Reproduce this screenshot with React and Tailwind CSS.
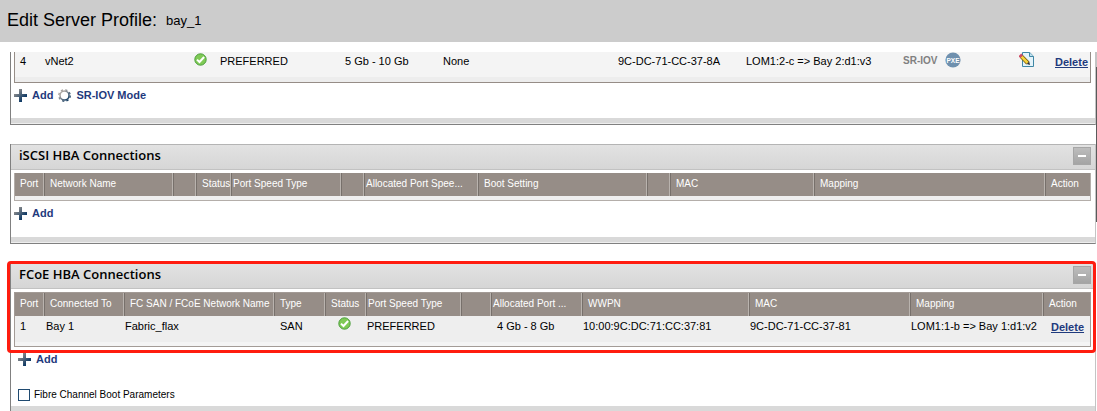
import clsx from "clsx";

const iscsiColumns = [
  { label: "Port", width: "w-[29px]" },
  { label: "Network Name", width: "w-[129px]" },
  { label: "", width: "w-[23px]" },
  { label: "Status", width: "w-[35px]" },
  { label: "Port Speed Type", width: "w-[110px]", tight: true },
  { label: "", width: "w-[23px]" },
  { label: "Allocated Port Spee...", width: "w-[114px]", tight: true },
  { label: "Boot Setting", width: "w-[169px]" },
  { label: "", width: "w-[23px]" },
  { label: "MAC", width: "w-[144px]" },
  { label: "Mapping", width: "" },
  { label: "Action", width: "w-[45px]" },
];

const fcoeColumns = [
  { label: "Port", width: "w-[29px]" },
  { label: "Connected To", width: "w-[80px]" },
  { label: "FC SAN / FCoE Network Name", width: "w-[150px]" },
  { label: "Type", width: "w-[51px]" },
  { label: "Status", width: "w-[41px]" },
  { label: "Port Speed Type", width: "w-[95px]", tight: true },
  { label: "", width: "w-[30px]" },
  { label: "Allocated Port ...", width: "w-[91px]", tight: true },
  { label: "WWPN", width: "w-[167px]" },
  { label: "MAC", width: "w-[161px]" },
  { label: "Mapping", width: "" },
  { label: "Action", width: "w-[47px]" },
];

function StatusOk() {
  return (
    <svg width="13" height="13" viewBox="0 0 13 13" role="img" aria-label="OK" className="block">
      <circle cx="6.5" cy="6.5" r="5.7" fill="#7fca55" stroke="#4c9e3e" />
      <path d="M3 6.6 5.5 9l4.6-5" fill="none" stroke="#fff" strokeWidth="2" />
    </svg>
  );
}

function PlusIcon() {
  return (
    <svg width="13" height="13" viewBox="0 0 13 13" aria-hidden="true">
      <defs>
        <linearGradient id="plus" x1="0" y1="0" x2="1" y2="1">
          <stop offset="0.2" stopColor="#8a8a8a" />
          <stop offset="0.75" stopColor="#0f3a66" />
        </linearGradient>
      </defs>
      <path d="M5 0h3v5h5v3H8v5H5V8H0V5h5z" fill="url(#plus)" />
    </svg>
  );
}

function GearIcon() {
  return (
    <svg width="13" height="13" viewBox="0 0 13 13" aria-hidden="true">
      <defs>
        <linearGradient id="gear" x1="0" y1="0" x2="1" y2="1">
          <stop offset="0.25" stopColor="#a9a4a0" />
          <stop offset="0.85" stopColor="#1d4468" />
        </linearGradient>
      </defs>
      <circle cx="6.5" cy="6.5" r="4.5" fill="none" stroke="url(#gear)" strokeWidth="1.5" />
      <circle cx="6.5" cy="6.5" r="5.7" fill="none" stroke="url(#gear)" strokeWidth="1.4" strokeDasharray="2.24 2.24" />
    </svg>
  );
}

function PxeIcon() {
  return (
    <svg width="16" height="16" viewBox="0 0 16 16" role="img" aria-label="PXE">
      <circle cx="8" cy="8" r="7.6" fill="#6f90ae" />
      <text x="8" y="10.5" textAnchor="middle" fontSize="6.5" fontWeight="bold" fontFamily="Liberation Sans, sans-serif" fill="#fff">
        PXE
      </text>
    </svg>
  );
}

function EditIcon() {
  return (
    <svg width="15" height="15" viewBox="0 0 15 15" aria-hidden="true" className="block">
      <path d="M3.5.5h7.2l3.8 3.8v10.2h-11z" fill="#e4f3fa" stroke="#3f87a5" />
      <path d="M10.5.5v4h4" fill="#bfe0ee" stroke="#3f87a5" />
      <path d="m2.4 4.4 6.4 6.6" stroke="#7a5a10" strokeWidth="4.2" />
      <path d="m2.6 4.6 6 6.2" stroke="#f6d43c" strokeWidth="2.6" />
      <path d="m.9 2.9 1.7 1.8" stroke="#cf4a63" strokeWidth="3.8" />
      <path d="m7.8 12 2.4-2.4.8 3.4z" fill="#333" />
    </svg>
  );
}

function AddButton() {
  return (
    <button type="button" className="flex items-center gap-[5px] font-bold text-[#1f3a7d]">
      <PlusIcon />
      Add
    </button>
  );
}

function DeleteLink() {
  return (
    <a href="#delete" className="font-bold text-[#1f3a7d] underline">
      Delete
    </a>
  );
}

function PanelHeader({ title }) {
  return (
    <div className="flex h-[26px] items-start justify-between border-y border-t-[#b4b4b4] border-b-[#c2c2c2] bg-linear-to-b from-[#e2e2e2] to-[#d6d6d6] pt-[2px] pr-1 pl-2">
      <h2 className="font-['Open_Sans',sans-serif] text-[13px] leading-4 font-semibold text-black">{title}</h2>
      <button
        type="button"
        aria-label={`Collapse ${title}`}
        className="flex size-[18px] items-center justify-center border border-[#a6a6a6] bg-linear-to-b from-[#bdbdbd] to-[#a4a4a4]"
      >
        <span className="h-[2px] w-2 bg-white" />
      </button>
    </div>
  );
}

function HeaderRow({ columns }) {
  return (
    <thead>
      <tr className="h-[23px] bg-[#968d87] text-left text-white">
        {columns.map((col, i) => (
          <th
            key={i}
            scope="col"
            className={clsx(
              "border-r border-r-[#b9b3ae] p-0 pb-[2px] text-[10px] font-normal whitespace-nowrap last:border-r-0",
              i > 0 && "border-l border-l-[#77706b]",
              col.tight ? "pl-px" : "pl-[5px]",
              col.width
            )}
          >
            {col.label}
          </th>
        ))}
      </tr>
    </thead>
  );
}

function PanelFooter() {
  return <div className="h-[6px] border-b border-[#eee] bg-[#d9d9d9]" />;
}

export default function App() {
  return (
    <div className="relative bg-white font-['Liberation_Sans',Arial,sans-serif] text-[11px] leading-[13px] text-black">
      <header className="flex h-[42px] items-center gap-[9px] bg-[#ccc] px-[7px] pb-[2px]">
        <h1 className="text-[18px] leading-5">Edit Server Profile:</h1>
        <span className="text-[13px]">bay_1</span>
      </header>

      <main className="flex flex-col gap-[19px] pt-[10px] pr-px pl-[10px]">
        {/* Ethernet connections */}
        <section className="border-r border-b border-l border-r-[#c4c4c4] border-b-[#808080] border-l-[#808080]">
          <div className="mr-1 ml-[3px] border-r border-b border-l border-[#968d87]">
            <table className="w-full table-fixed border-separate border-spacing-0 bg-[#f4f4f4]">
              <tbody>
                <tr className="h-[25px] align-top">
                  <td className="w-[30px] p-0 pt-[3px] pl-[5px]">4</td>
                  <td className="w-[149px] p-0 pt-[3px]">vNet2</td>
                  <td className="w-[26px] p-0 pt-px">
                    <StatusOk />
                  </td>
                  <td className="w-[125px] p-0 pt-[3px]">PREFERRED</td>
                  <td className="w-[98px] p-0 pt-[3px]">5 Gb - 10 Gb</td>
                  <td className="p-0 pt-[3px]">None</td>
                  <td className="w-[128px] p-0 pt-[3px]">9C-DC-71-CC-37-8A</td>
                  <td className="w-[157px] p-0 pt-[3px]">LOM1:2-c =&gt; Bay 2:d1:v3</td>
                  <td className="w-[116px] p-0">
                    <div className="flex items-center gap-2">
                      <span className="text-[10px] font-bold text-[#808080]">SR-IOV</span>
                      <PxeIcon />
                    </div>
                  </td>
                  <td className="w-[36px] p-0">
                    <button type="button" aria-label="Edit connection" className="block">
                      <EditIcon />
                    </button>
                  </td>
                  <td className="w-[35px] p-0 pt-1">
                    <DeleteLink />
                  </td>
                </tr>
              </tbody>
            </table>
            <div className="h-[5px] bg-[#ededed]" />
          </div>
          <div className="flex h-[35px] items-start gap-[5px] pt-[6px] pl-[3px]">
            <AddButton />
            <button type="button" className="flex items-center gap-[5px] font-bold text-[#1f3a7d]">
              <GearIcon />
              SR-IOV Mode
            </button>
          </div>
          <PanelFooter />
        </section>

        {/* iSCSI HBA */}
        <section className="border-r border-b border-l border-r-[#c4c4c4] border-b-[#808080] border-l-[#808080]">
          <PanelHeader title="iSCSI HBA Connections" />
          <div className="mt-[3px] mr-1 ml-[3px] border-r border-b border-l border-[#b4aeaa]">
            <table className="w-full table-fixed border-separate border-spacing-0">
              <HeaderRow columns={iscsiColumns} />
            </table>
            <div className="h-1 bg-[#efefef]" />
          </div>
          <div className="h-[36px] pt-[6px] pl-[3px]">
            <AddButton />
          </div>
          <PanelFooter />
        </section>

        {/* FCoE HBA, outlined in red */}
        <section className="relative border-r border-l border-r-[#c4c4c4] border-l-[#808080]">
          <PanelHeader title="FCoE HBA Connections" />
          <div className="mt-[3px] mr-1 ml-[3px] border border-[#a39b96]">
            <table className="w-full table-fixed border-separate border-spacing-0 bg-[#eee]">
              <HeaderRow columns={fcoeColumns} />
              <tbody>
                <tr className="h-[26px] align-top">
                  <td className="p-0 pt-1 pl-[5px]">1</td>
                  <td className="p-0 pt-1 pl-[2px]">Bay 1</td>
                  <td className="p-0 pt-1 pl-px">Fabric_flax</td>
                  <td className="p-0 pt-1 pl-[6px]">SAN</td>
                  <td className="p-0 pt-px pl-[13px]">
                    <StatusOk />
                  </td>
                  <td className="p-0 pt-1 pl-px">PREFERRED</td>
                  <td className="p-0" />
                  <td className="p-0 pt-1 pl-[6px]">4 Gb - 8 Gb</td>
                  <td className="p-0 pt-1 pl-px">10:00:9C:DC:71:CC:37:81</td>
                  <td className="p-0 pt-1 pl-px">9C-DC-71-CC-37-81</td>
                  <td className="p-0 pt-1 pl-px">LOM1:1-b =&gt; Bay 1:d1:v2</td>
                  <td className="p-0 pt-[5px] pl-2">
                    <DeleteLink />
                  </td>
                </tr>
              </tbody>
            </table>
            <div className="h-1 bg-[#f4f4f4]" />
          </div>
          <div className="pt-[6px] pb-[5px] pl-[7px]">
            <AddButton />
            <label className="mt-[22px] flex items-center gap-1 text-[10px]">
              <input type="checkbox" className="size-3 appearance-none border border-[#1f4a70] bg-white checked:bg-[#1f4a70]" />
              Fibre Channel Boot Parameters
            </label>
          </div>
          <div className="h-[5px] bg-[#d9d9d9]" />
          <div className="pointer-events-none absolute -top-[2px] -right-px -left-1 h-[92px] rounded-sm border-3 border-[#ff1c0f]" />
        </section>
      </main>

      {/* Scrollbar edge */}
      <div className="absolute top-[52px] right-0 h-[170px] w-px border-t-[15px] border-[#c4c4c4] bg-[#5a5a5a]" />
    </div>
  );
}
